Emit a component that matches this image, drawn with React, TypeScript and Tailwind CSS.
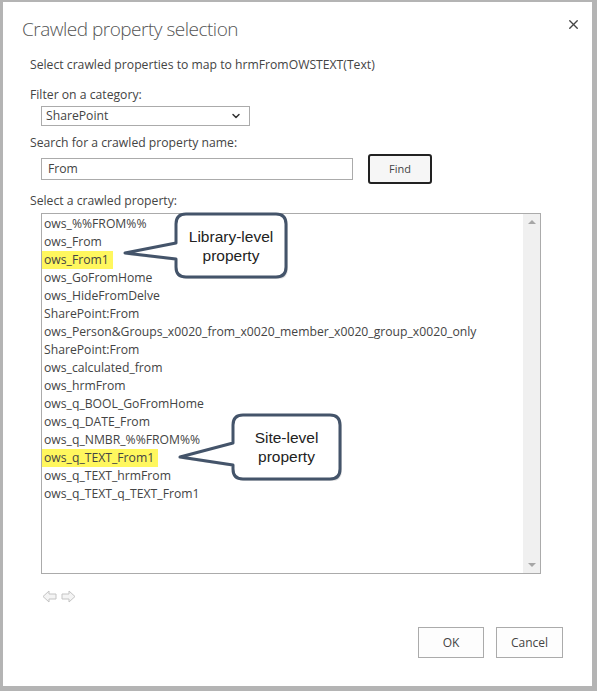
import { ChevronDown, X } from "lucide-react";

const items = [
  "ows_%%FROM%%",
  "ows_From",
  "ows_From1",
  "ows_GoFromHome",
  "ows_HideFromDelve",
  "SharePoint:From",
  "ows_Person&Groups_x0020_from_x0020_member_x0020_group_x0020_only",
  "SharePoint:From",
  "ows_calculated_from",
  "ows_hrmFrom",
  "ows_q_BOOL_GoFromHome",
  "ows_q_DATE_From",
  "ows_q_NMBR_%%FROM%%",
  "ows_q_TEXT_From1",
  "ows_q_TEXT_hrmFrom",
  "ows_q_TEXT_q_TEXT_From1",
];

const highlighted = new Set([2, 13]);

function Callout({
  path,
  lines,
  className,
  textClass,
}: {
  path: string;
  lines: string[];
  className: string;
  textClass: string;
}) {
  return (
    <div className={`absolute ${className}`}>
      <svg className="absolute inset-0 h-full w-full overflow-visible">
        <path d={path} transform="translate(2 2)" fill="#000" opacity="0.12" />
        <path d={path} fill="#fff" stroke="#44546a" strokeWidth="3" strokeLinejoin="round" />
      </svg>
      <div
        className={`absolute flex flex-col items-center justify-center text-[15.5px] leading-[19px] text-[#222] ${textClass}`}
        style={{ fontFamily: '"Liberation Sans", Arial, sans-serif' }}
      >
        {lines.map((l) => (
          <span key={l}>{l}</span>
        ))}
      </div>
    </div>
  );
}

function ArrowIcon({ flip }: { flip?: boolean }) {
  return (
    <svg width="15" height="13" viewBox="0 0 15 13" className={flip ? "-scale-x-100" : ""}>
      <path
        d="M1 6.5 L7 1 V4 H14 V9 H7 V12 Z"
        fill="#f4f4f4"
        stroke="#c4c4c4"
        strokeWidth="1"
        strokeLinejoin="round"
      />
    </svg>
  );
}

export default function App() {
  return (
    <div
      className="relative h-[691px] w-[597px] border-b-[5px] border-l-[3px] border-r-[5px] border-t-2 border-[#b4b4b4] bg-white text-[#444]"
      style={{ fontFamily: '"Open Sans", "Segoe UI", sans-serif' }}
    >
      <div className="flex items-start justify-between pl-[19px] pr-[11px] pt-[13px]">
        <h1 className="text-[19px] font-light leading-[28px] tracking-[-0.5px] text-[#555]">
          Crawled property selection
        </h1>
        <button type="button" className="mt-[2px] text-[#444]">
          <X size={15} strokeWidth={2.2} />
        </button>
      </div>

      <div className="pl-[27px] text-[12.2px] leading-[18px]">
        <p className="mt-[13px]">Select crawled properties to map to hrmFromOWSTEXT(Text)</p>

        <p className="mt-[12px]">Filter on a category:</p>
        <div className="ml-[11px] mt-[2px] flex h-[20px] w-[209px] items-center justify-between border border-[#ababab] pl-[4px] pr-[7px]">
          <span>SharePoint</span>
          <ChevronDown size={12} strokeWidth={3} className="text-[#333]" />
        </div>

        <p className="mt-[8px]">Search for a crawled property name:</p>
        <div className="mt-[2px] flex h-[30px] items-center">
          <div className="ml-[11px] flex h-[22px] w-[312px] items-center border border-[#ababab] pl-[6px]">
            From
          </div>
          <button
            type="button"
            className="ml-[15px] h-[30px] w-[64px] rounded-[3px] border-2 border-[#222] bg-[#f6f6f6] text-[11px]"
          >
            Find
          </button>
        </div>

        <p className="mt-[8px]">Select a crawled property:</p>
        <div className="relative ml-[11px] mt-[3px] flex h-[361px] w-[500px] border border-[#ababab]">
          <ul className="flex-1 pl-[2px] pt-px">
            {items.map((item, i) => (
              <li key={i} className="h-[18px]">
                <span className={highlighted.has(i) ? "-ml-[2px] bg-[#fff75e] pb-[1px] pl-[2px] pr-[4px]" : ""}>
                  {item}
                </span>
              </li>
            ))}
          </ul>
          <div className="flex w-[17px] flex-col items-center justify-between bg-[#f0f0f0] py-[6px]">
            <div className="h-0 w-0 border-x-[4px] border-b-[4px] border-x-transparent border-b-[#a6a6a6]" />
            <div className="h-0 w-0 border-x-[4px] border-t-[4px] border-x-transparent border-t-[#a6a6a6]" />
          </div>
        </div>

        <div className="ml-[12px] mt-[15px] flex h-[14px] items-center gap-[4px]">
          <ArrowIcon />
          <ArrowIcon flip />
        </div>
      </div>

      <div className="mt-[24px] flex justify-end gap-[12px] pr-[29px] text-[12px]">
        <button type="button" className="h-[31px] w-[66px] border border-[#ababab] bg-[#fdfdfd]">
          OK
        </button>
        <button type="button" className="h-[31px] w-[67px] border border-[#ababab] bg-[#fdfdfd]">
          Cancel
        </button>
      </div>

      <Callout
        className="left-[117px] top-[208px] h-[72px] w-[172px]"
        path="M66 4 H156 Q166 4 166 14 V57 Q166 67 156 67 H66 Q56 67 56 57 V49 L5 43 L56 33 V14 Q56 4 66 4 Z"
        lines={["Library-level", "property"]}
        textClass="left-[56px] top-[4px] h-[63px] w-[110px]"
      />
      <Callout
        className="left-[172px] top-[409px] h-[74px] w-[172px]"
        path="M68 4 H155 Q165 4 165 14 V58 Q165 68 155 68 H68 Q58 68 58 58 V54 L5 46 L58 32 V14 Q58 4 68 4 Z"
        lines={["Site-level", "property"]}
        textClass="left-[58px] top-[4px] h-[64px] w-[107px]"
      />
    </div>
  );
}
